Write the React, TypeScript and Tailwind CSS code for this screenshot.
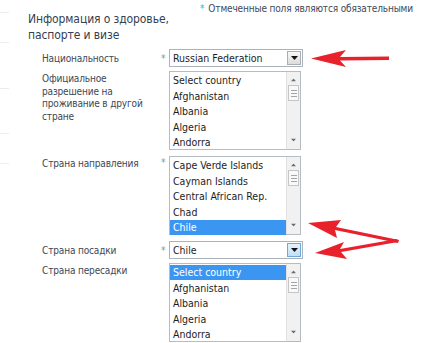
import React from 'react';

const font = { fontFamily: '"DejaVu Sans Condensed", "DejaVu Sans", Tahoma, sans-serif' };

function Triangle({ up, className }: { up?: boolean; className?: string }) {
  return (
    <svg width="7" height="4" viewBox="0 0 7 4" className={className}>
      <path d={up ? 'M0 4 L3.5 0 L7 4 Z' : 'M0 0 L7 0 L3.5 4 Z'} fill="currentColor" />
    </svg>
  );
}

function Select({ value, focused }: { value: string; focused?: boolean }) {
  return (
    <div className="flex h-[18px] w-[134px] items-center border border-[#aab3bc] bg-white pl-[3px] pr-[1px]">
      <span className="flex-1 text-[10.5px] leading-none text-[#1d1d1d]">{value}</span>
      <div
        className={
          focused
            ? 'flex h-[14px] w-[14px] items-center justify-center border border-[#6fa8d6] bg-gradient-to-b from-[#e6f3fc] to-[#bfe0f6] text-[#111]'
            : 'flex h-[14px] w-[14px] items-center justify-center border border-[#a9afb5] bg-gradient-to-b from-[#f8f8f8] to-[#dcdcdc] text-[#111]'
        }
      >
        <Triangle />
      </div>
    </div>
  );
}

function ListBox({ items, selected }: { items: string[]; selected?: number }) {
  return (
    <div className="flex h-[79px] w-[132px] border border-[#b4bcc4] bg-white">
      <div className="flex-1 pt-[1px]">
        {items.map((it, i) => (
          <div
            key={it}
            className={
              i === selected
                ? 'flex h-[15.4px] items-center bg-[#3b96f2] pl-[3px] text-[10.5px] leading-none text-white'
                : 'flex h-[15.4px] items-center pl-[3px] text-[10.5px] leading-none text-[#1d1d1d]'
            }
          >
            {it}
          </div>
        ))}
      </div>
      <div className="flex w-[14px] flex-col items-center border-l border-[#e2e2e2] bg-[#f1f1f1] text-[#6b6b6b]">
        <Triangle up className="mt-[6px] scale-75" />
        <div className="mt-[3px] flex h-[16px] w-[11px] flex-col items-center justify-center gap-[2px] border border-[#c6c6c6] bg-[#f9f9f9]">
          <div className="h-px w-[6px] bg-[#a5a5a5]" />
          <div className="h-px w-[6px] bg-[#a5a5a5]" />
          <div className="h-px w-[6px] bg-[#a5a5a5]" />
        </div>
        <div className="flex-1" />
        <Triangle className="mb-[7px] scale-75" />
      </div>
    </div>
  );
}

function Row({
  label,
  required,
  children,
  className,
}: {
  label: React.ReactNode;
  required?: boolean;
  children: React.ReactNode;
  className?: string;
}) {
  return (
    <div className={'flex ' + (className ?? '')}>
      <div className="w-[119px] pt-[2px] text-[10px] leading-[12.5px] tracking-[-0.15px] text-[#3b4856]">
        {label}
      </div>
      <div className="w-[8px] pt-[1px] text-[10px] leading-[12px] text-[#3fb0c6]">{required ? '*' : ''}</div>
      {children}
    </div>
  );
}

const countries = ['Select country', 'Afghanistan', 'Albania', 'Algeria', 'Andorra'];

export default function App() {
  return (
    <div className="relative h-[343px] w-[424px] overflow-hidden bg-white" style={font}>
      <div className="flex">
        {/* cut-off side panel */}
        <div className="w-[9px] shrink-0">
          <div className="mt-[12px] h-px bg-[#ececec]" />
          <div className="mt-[29px] h-px bg-[#ececec]" />
          <div className="mt-[45px] h-px bg-[#ececec]" />
          <div className="mt-[44px] h-px bg-[#ececec]" />
          <div className="mt-[29px] h-px bg-[#efefef]" />
        </div>

        <div className="flex-1 pl-[19px]">
          <div className="flex items-start">
            <h2 className="w-[165px] shrink-0 pt-[11px] text-[12px] leading-[16px] tracking-[-0.1px] text-[#34414f]">
              Информация о здоровье, паспорте и визе
            </h2>
            <p className="ml-[7px] whitespace-nowrap pt-[3px] text-[10px] leading-[12px] tracking-[-0.15px] text-[#3d4a58]">
              <span className="mr-[4px] text-[#3fb0c6]">*</span>Отмеченные поля являются обязательными
            </p>
          </div>

          <div className="pl-[14px]">
            <Row label="Национальность" required className="mt-[6px] items-center">
              <Select value="Russian Federation" />
            </Row>
            <Row label="Официальное разрешение на проживание в другой стране" className="mt-[4px]">
              <ListBox items={countries} />
            </Row>
            <Row label="Страна направления" required className="mt-[6px]">
              <ListBox
                items={['Cape Verde Islands', 'Cayman Islands', 'Central African Rep.', 'Chad', 'Chile']}
                selected={4}
              />
            </Row>
            <Row label="Страна посадки" required className="mt-[6px] items-center">
              <Select value="Chile" focused />
            </Row>
            <Row label="Страна пересадки" className="mt-[4px]">
              <ListBox items={countries} selected={0} />
            </Row>
          </div>
        </div>
      </div>

      {/* red annotation arrows */}
      <svg className="pointer-events-none absolute left-0 top-0" width="424" height="343" viewBox="0 0 424 343">
        <g fill="#e8212b" stroke="none">
          <polygon points="311,58.5 346,50 340,57 389,56.5 389,60 340,60.5 346,67" />
          <polygon points="308,223 341,220 336,227 399,240 398,243 335,230 337,238" />
          <polygon points="315,253 344,242 340,249 397,239 398,242 341,252 347,259" />
        </g>
      </svg>
    </div>
  );
}
